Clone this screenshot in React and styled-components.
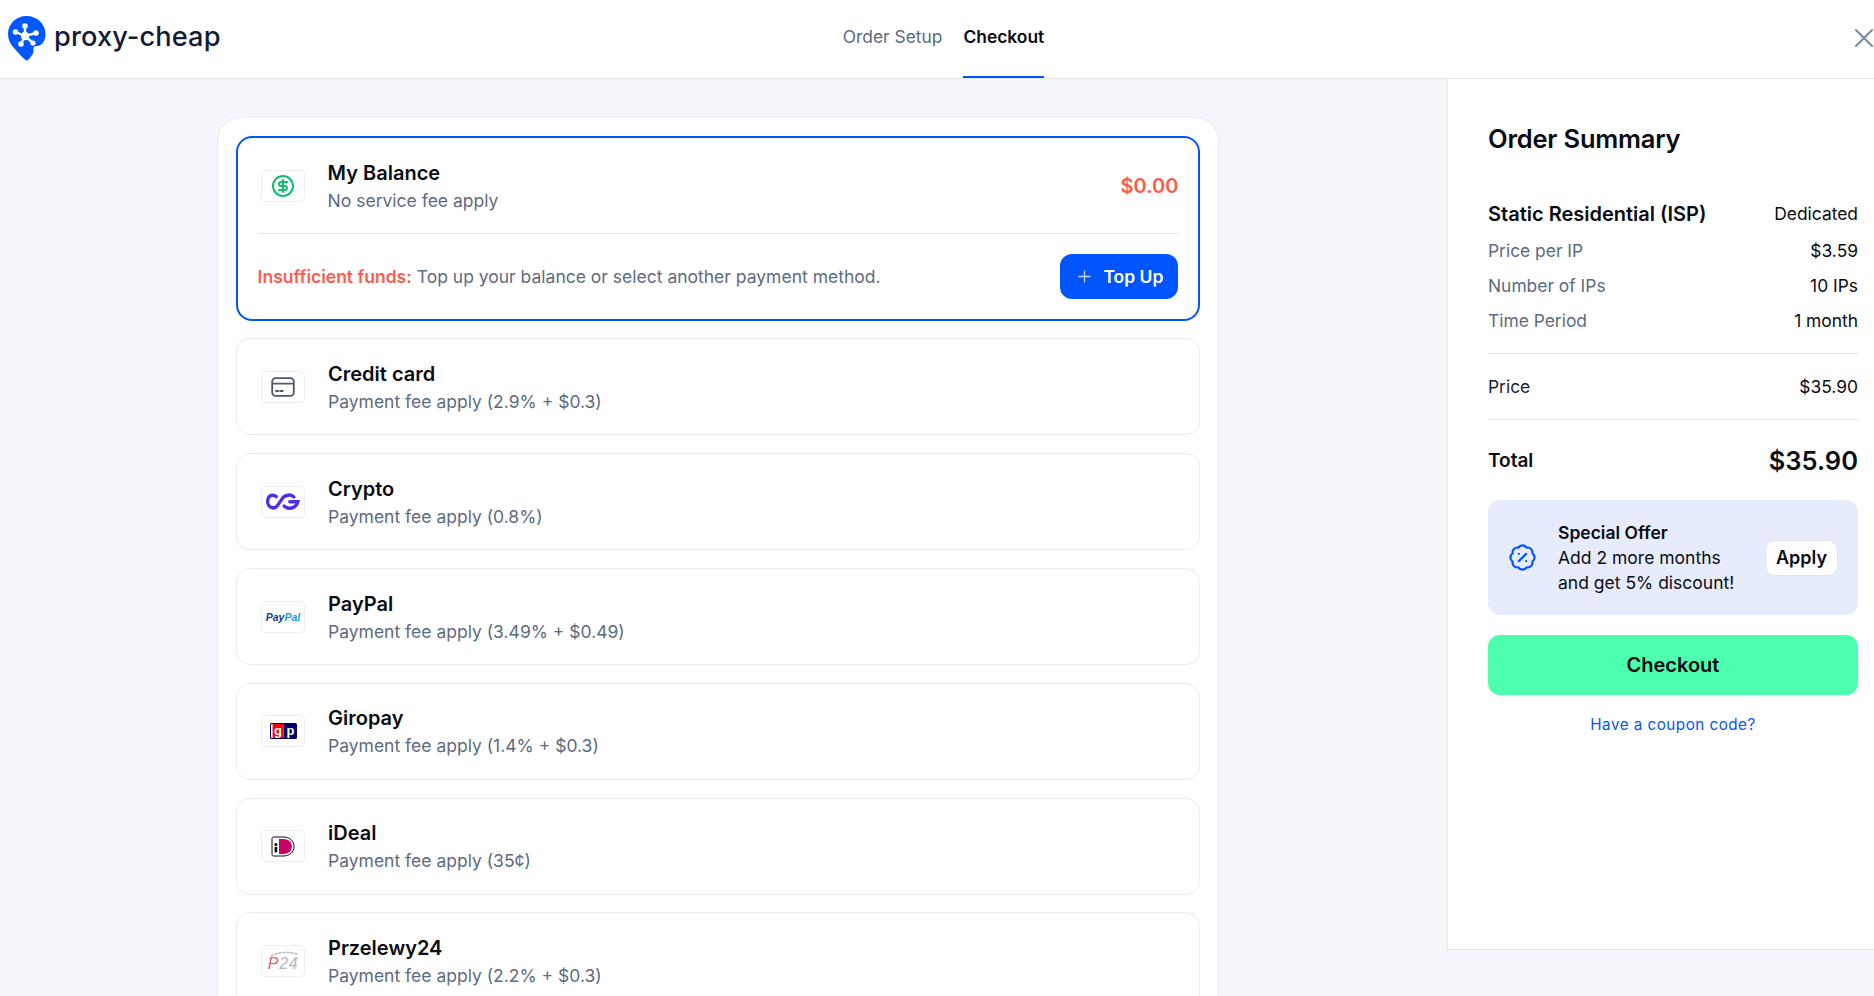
import React from "react";
import styled, { createGlobalStyle } from "styled-components";
import { BadgePercent, CircleDollarSign, Plus, X } from "lucide-react";

const Global = createGlobalStyle`
  html, body { margin: 0; padding: 0; height: 100%; background: #f4f6fb; overflow: hidden; }
  body { font-family: Inter, "Liberation Sans", sans-serif; color: #0a0c12; }
  * { box-sizing: border-box; }
`;

const Page = styled.div`
  width: 1874px;
  height: 996px;
  display: flex;
  flex-direction: column;
  overflow: hidden;
`;

const Header = styled.header`
  height: 79px;
  flex: none;
  background: #fff;
  border-bottom: 1px solid #e3e6ec;
  display: grid;
  grid-template-columns: 1fr auto 1fr;
  align-items: stretch;
  padding: 0 0 0 8px;
`;

const Brand = styled.div`
  display: flex;
  align-items: center;
  gap: 8px;
  padding-bottom: 2px;
`;

const BrandName = styled.span`
  font-family: Inter, sans-serif;
  font-size: 27.2px;
  font-weight: 500;
  color: #141b34;
  letter-spacing: 0.1px;
  margin-top: -4px;
`;

const Tabs = styled.nav`
  display: flex;
  gap: 21px;
  margin-left: 5px;
`;

const Tab = styled.div`
  height: 78px;
  display: flex;
  align-items: center;
  padding-bottom: 3px;
  font-size: 17.4px;
  font-weight: ${(p) => (p.$active ? 600 : 400)};
  color: ${(p) => (p.$active ? "#0a0c12" : "#5d6b7f")};
  border-bottom: 2px solid ${(p) => (p.$active ? "#0055ff" : "transparent")};
`;

const Close = styled.div`
  display: flex;
  justify-content: flex-end;
  align-items: center;
  color: #7b8da3;
  padding-bottom: 2px;
  overflow: hidden;
`;

const Body = styled.div`
  flex: 1;
  display: flex;
  align-items: flex-start;
  min-height: 0;
`;

const Main = styled.main`
  width: 1447px;
  flex: none;
  padding: 38px 228px 0 217px;
`;

const Panel = styled.section`
  background: #fff;
  border: 1px solid #e9ebf0;
  border-radius: 24px;
  padding: 18px 18px 40px;
  display: flex;
  flex-direction: column;
  gap: 17.8px;
`;

const BalanceCard = styled.div`
  border: 2.4px solid #0055ff;
  border-radius: 16px;
  padding: 0 19.6px;
  height: 184.7px;
`;

const BalanceTop = styled.div`
  height: 96px;
  display: flex;
  align-items: center;
  border-bottom: 1px solid #e3e5ea;
`;

const BalanceBottom = styled.div`
  height: 84px;
  display: flex;
  align-items: center;
  justify-content: space-between;
  font-size: 17.5px;
  color: #5d6b7f;
`;

const Warn = styled.b`
  font-weight: 600;
  color: #ff5a4a;
`;

const TopUp = styled.button`
  width: 118px;
  height: 45px;
  border: 0;
  border-radius: 12px;
  background: #0055ff;
  color: #fff;
  font: 600 17.5px Inter, sans-serif;
  display: flex;
  align-items: center;
  justify-content: center;
  gap: 9px;
`;

const MethodCard = styled.div`
  height: 97px;
  flex: none;
  border: 1px solid #eaecf0;
  border-radius: 14px;
  padding: 0 24px;
  display: flex;
  align-items: center;
`;

const LogoBox = styled.div`
  width: 44px;
  height: 32px;
  flex: none;
  margin-left: ${(p) => (p.$flush ? "3px" : "0")};
  border: 1px solid #eceef2;
  border-radius: 5px;
  display: flex;
  align-items: center;
  justify-content: center;
  background: #fff;
  overflow: hidden;
  position: relative;
`;

const MethodText = styled.div`
  margin: 2px 0 0 23px;
  flex: 1;
  display: flex;
  flex-direction: column;
`;

const MethodName = styled.div`
  font-size: 20px;
  line-height: 28px;
  font-weight: 600;
  color: #0a0c12;
`;

const MethodFee = styled.div`
  font-size: 17.5px;
  line-height: 28px;
  color: #5d6b7f;
`;

const Balance = styled.div`
  font-size: 20px;
  font-weight: 600;
  color: #ff5a4a;
`;

const PayPalMark = styled.span`
  font: italic 800 10.5px "Liberation Sans", sans-serif;
  color: #123984;
`;

const PayPalPal = styled.span`
  color: #179bd7;
`;

const P24Mark = styled.span`
  font: italic 400 16px "Liberation Sans", sans-serif;
  letter-spacing: 0.6px;
  color: #b4b8bd;
  margin-top: 6px;
`;

const P24P = styled.span`
  color: #e0606e;
`;

const P24Arc = styled.svg`
  position: absolute;
  left: 8px;
  top: 5px;
`;

const Summary = styled.aside`
  flex: 1;
  height: 871px;
  background: #fff;
  border-left: 1px solid #e3e6ec;
  border-bottom: 1px solid #e3e6ec;
  padding: 40px 16px 0 40px;
`;

const SummaryTitle = styled.h2`
  margin: 0 0 35px;
  height: 40px;
  line-height: 40px;
  font-size: 25.5px;
  font-weight: 600;
  color: #0a0c12;
  letter-spacing: -0.2px;
`;

const Line = styled.div`
  display: flex;
  justify-content: space-between;
  align-items: center;
  height: ${(p) => p.$h || 35}px;
  margin-top: ${(p) => p.$top || 0}px;
  font-size: 17.4px;
  color: #0a0c12;
`;

const LineLabel = styled.span`
  color: #5d6b7f;
`;

const ProductName = styled.span`
  font-size: 20px;
  font-weight: 600;
`;

const PriceLabel = styled.span`
  color: #1a2233;
`;

const TotalLabel = styled.span`
  font-size: 19px;
  font-weight: 600;
`;

const TotalValue = styled.span`
  font-size: 25.5px;
  font-weight: 600;
`;

const Rule = styled.hr`
  margin: ${(p) => p.$m || "0"};
  border: 0;
  border-top: 1px solid #dfe2e8;
`;

const Offer = styled.div`
  height: 115px;
  margin-top: 10px;
  background: #e6ecfd;
  border-radius: 12px;
  display: flex;
  align-items: center;
  padding: 0 20px 0 20px;
  color: #0055ff;
`;

const OfferText = styled.div`
  flex: 1;
  margin-left: 21px;
  font-size: 17.5px;
  line-height: 25px;
  color: #0a0c12;
`;

const OfferTitle = styled.div`
  font-weight: 600;
`;

const Apply = styled.button`
  width: 73px;
  height: 36px;
  background: #fff;
  border: 1px solid #dfe3ec;
  border-radius: 10px;
  font: 600 18px Inter, sans-serif;
  color: #0a0c12;
`;

const CheckoutButton = styled.button`
  display: block;
  width: 100%;
  height: 60px;
  margin-top: 20px;
  border: 0;
  border-radius: 12px;
  background: #4bffae;
  font: 600 20px Inter, sans-serif;
  color: #0a0c12;
`;

const Coupon = styled.div`
  margin-top: 20px;
  text-align: center;
  font-size: 15.2px;
  line-height: 20px;
  letter-spacing: 0.5px;
  color: #0055ff;
`;

const CloseIcon = styled(X)`
  margin-right: -6px;
`;

const PinLogo = () => (
  <svg width="38" height="45" viewBox="0 0 38 45">
    <path
      fill="#0057ff"
      d="M18.5 0C29 0 37.5 8 37.5 18C37.5 26 33 30 29 30C26 30 25 31 25.5 34C26 38 22 42 19 44.8C17 44 12 39 6 32C2 28 0 23 0 18C0 8 8 0 18.5 0Z"
    />
    <path
      stroke="#fff"
      strokeWidth="2.4"
      strokeLinecap="round"
      fill="none"
      d="M17 20L17 10M17 20L28 17M17 20L7.5 16M17 20L13 28M17 20L25 27"
    />
    <g fill="#fff">
      <circle cx="17" cy="10" r="2.8" />
      <circle cx="28" cy="17" r="2.8" />
      <circle cx="7.5" cy="16" r="2.8" />
      <circle cx="13" cy="28" r="2.8" />
      <circle cx="25" cy="27" r="2.6" />
      <circle cx="17" cy="20" r="4.2" />
    </g>
  </svg>
);

const CardIcon = () => (
  <svg width="24" height="20" viewBox="0 0 24 20" fill="none" stroke="#4d5a6c" strokeWidth="1.8">
    <rect x="1.2" y="1.2" width="21.6" height="17.6" rx="3.4" />
    <path d="M1.2 6.6H22.8" />
    <path d="M5 14H7.4M9.4 14H11.8" strokeLinecap="round" />
  </svg>
);

const CryptoIcon = () => (
  <svg width="34" height="17" viewBox="0 0 33 15" preserveAspectRatio="none" fill="none" stroke="#4f2bea" strokeWidth="3.1" strokeLinecap="round">
    <path d="M10 3.2C7.5 1.2 1.8 1.2 1.6 7.4C1.5 13.6 8.6 14.4 11 11.2L16 4.6C18.4 1.4 24 1 27 3.4" />
    <path d="M17.6 11.6C21 14.4 29 14.4 31 7.8H23" />
  </svg>
);

const GiropayIcon = () => (
  <svg width="27" height="16" viewBox="0 0 27 16">
    <rect width="27" height="16" rx="1.6" fill="#000268" />
    <rect x="1" y="1" width="12.5" height="14" rx="1" fill="#fff" />
    <rect x="2.6" y="1" width="10.9" height="14" fill="#ff0007" />
    <text x="8" y="11.6" textAnchor="middle" fontFamily="Liberation Sans" fontWeight="700" fontSize="13" fill="#fff">g</text>
    <text x="20.4" y="11.6" textAnchor="middle" fontFamily="Liberation Sans" fontWeight="700" fontSize="13" fill="#fff">p</text>
  </svg>
);

const IdealIcon = () => (
  <svg width="24" height="21" viewBox="0 0 24 21">
    <path d="M2.6 1H12C19 1 23 5 23 10.5C23 16 19 20 12 20H2.6C1.6 20 1 19.4 1 18.4V2.6C1 1.6 1.6 1 2.6 1Z" fill="#fff" stroke="#0a0a0a" strokeWidth="1" />
    <path d="M8 3H12C18 3 20.8 6.4 20.8 10.5C20.8 14.6 18 18 12 18H8Z" fill="#cc0066" />
    <rect x="3.6" y="11" width="2.6" height="5.4" fill="#0a0a0a" />
    <circle cx="4.9" cy="8.4" r="1.5" fill="#0a0a0a" />
  </svg>
);

const methods = [
  { name: "Credit card", fee: "Payment fee apply (2.9% + $0.3)", logo: <CardIcon /> },
  { name: "Crypto", fee: "Payment fee apply (0.8%)", logo: <CryptoIcon /> },
  {
    name: "PayPal",
    fee: "Payment fee apply (3.49% + $0.49)",
    logo: (
      <PayPalMark>
        Pay<PayPalPal>Pal</PayPalPal>
      </PayPalMark>
    ),
  },
  { name: "Giropay", fee: "Payment fee apply (1.4% + $0.3)", logo: <GiropayIcon /> },
  { name: "iDeal", fee: "Payment fee apply (35¢)", logo: <IdealIcon /> },
  {
    name: "Przelewy24",
    fee: "Payment fee apply (2.2% + $0.3)",
    logo: (
      <>
        <P24Arc width="29" height="6" viewBox="0 0 29 6" fill="none">
          <path d="M1 5C8 1 20 0 28 3.6" stroke="#a8acb2" strokeWidth="1.3" strokeDasharray="3 1" />
        </P24Arc>
        <P24Mark>
          <P24P>P</P24P>24
        </P24Mark>
      </>
    ),
  },
];

export default function App() {
  return (
    <Page>
      <Global />
      <Header>
        <Brand>
          <PinLogo />
          <BrandName>proxy-cheap</BrandName>
        </Brand>
        <Tabs>
          <Tab>Order Setup</Tab>
          <Tab $active>Checkout</Tab>
        </Tabs>
        <Close>
          <CloseIcon size={32} strokeWidth={1.6} />
        </Close>
      </Header>
      <Body>
        <Main>
          <Panel>
            <BalanceCard>
              <BalanceTop>
                <LogoBox $flush>
                  <CircleDollarSign size={24} color="#0cc06e" strokeWidth={2} />
                </LogoBox>
                <MethodText>
                  <MethodName>My Balance</MethodName>
                  <MethodFee>No service fee apply</MethodFee>
                </MethodText>
                <Balance>$0.00</Balance>
              </BalanceTop>
              <BalanceBottom>
                <span>
                  <Warn>Insufficient funds:</Warn> Top up your balance or select another payment method.
                </span>
                <TopUp>
                  <Plus size={19} strokeWidth={1.6} color="#c8d8ff" />
                  Top Up
                </TopUp>
              </BalanceBottom>
            </BalanceCard>
            {methods.map((m) => (
              <MethodCard key={m.name}>
                <LogoBox>{m.logo}</LogoBox>
                <MethodText>
                  <MethodName>{m.name}</MethodName>
                  <MethodFee>{m.fee}</MethodFee>
                </MethodText>
              </MethodCard>
            ))}
          </Panel>
        </Main>
        <Summary>
          <SummaryTitle>Order Summary</SummaryTitle>
          <Line $h={39}>
            <ProductName>Static Residential (ISP)</ProductName>
            <span>Dedicated</span>
          </Line>
          <Line>
            <LineLabel>Price per IP</LineLabel>
            <span>$3.59</span>
          </Line>
          <Line>
            <LineLabel>Number of IPs</LineLabel>
            <span>10 IPs</span>
          </Line>
          <Line>
            <LineLabel>Time Period</LineLabel>
            <span>1 month</span>
          </Line>
          <Rule $m="15px 0 0" />
          <Line $h={65}>
            <PriceLabel>Price</PriceLabel>
            <span>$35.90</span>
          </Line>
          <Rule />
          <Line $h={60} $top={10}>
            <TotalLabel>Total</TotalLabel>
            <TotalValue>$35.90</TotalValue>
          </Line>
          <Offer>
            <BadgePercent size={29} strokeWidth={1.8} />
            <OfferText>
              <OfferTitle>Special Offer</OfferTitle>
              Add 2 more months
              <br />
              and get 5% discount!
            </OfferText>
            <Apply>Apply</Apply>
          </Offer>
          <CheckoutButton>Checkout</CheckoutButton>
          <Coupon>Have a coupon code?</Coupon>
        </Summary>
      </Body>
    </Page>
  );
}
